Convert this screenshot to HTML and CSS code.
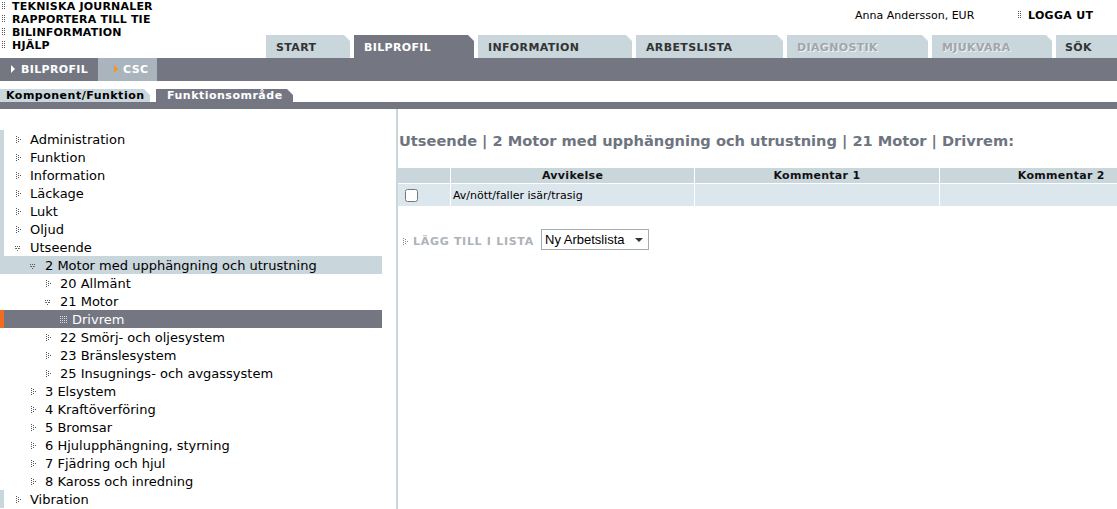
FILE: index.html
```html
<!DOCTYPE html>
<html lang="sv">
<head>
    <meta charset="UTF-8">
    <title>Bilprofil - CSC</title>
    <link rel="stylesheet" href="styles.css">
</head>
<body>
    <div class="header">
        <ul class="toplinks">
            <li><span class="dots"></span>TEKNISKA JOURNALER</li>
            <li><span class="dots"></span>RAPPORTERA TILL TIE</li>
            <li><span class="dots"></span>BILINFORMATION</li>
            <li><span class="dots"></span>HJÄLP</li>
        </ul>
        <div class="user">
            <span class="username">Anna Andersson, EUR</span>
            <span class="logout"><span class="dots"></span>LOGGA UT</span>
        </div>
    </div>

    <div class="tabs">
        <div class="tab t-start">START</div>
        <div class="tab t-bilprofil active">BILPROFIL</div>
        <div class="tab t-info">INFORMATION</div>
        <div class="tab t-arbets">ARBETSLISTA</div>
        <div class="tab t-diag disabled">DIAGNOSTIK</div>
        <div class="tab t-mjuk disabled">MJUKVARA</div>
        <div class="tab t-sok">SÖK</div>
    </div>

    <div class="subnav">
        <div class="subnav-item"><span class="arrow"></span>BILPROFIL</div>
        <div class="subnav-item current"><span class="arrow orange"></span>CSC</div>
    </div>

    <div class="subtabs">
        <div class="subtab">Komponent/Funktion</div>
        <div class="subtab active">Funktionsområde</div>
    </div>
    <div class="subbar"></div>

    <div class="main">
        <ul class="tree">
            <li class="node lvl0"><span class="ico closed"></span>Administration</li>
            <li class="node lvl0"><span class="ico closed"></span>Funktion</li>
            <li class="node lvl0"><span class="ico closed"></span>Information</li>
            <li class="node lvl0"><span class="ico closed"></span>Läckage</li>
            <li class="node lvl0"><span class="ico closed"></span>Lukt</li>
            <li class="node lvl0"><span class="ico closed"></span>Oljud</li>
            <li class="node lvl0"><span class="ico open"></span>Utseende</li>
            <li class="node lvl1 hilite"><span class="ico open"></span>2 Motor med upphängning och utrustning</li>
            <li class="node lvl2"><span class="ico closed"></span>20 Allmänt</li>
            <li class="node lvl2"><span class="ico open"></span>21 Motor</li>
            <li class="node lvl3 selected"><span class="ico leaf"></span>Drivrem</li>
            <li class="node lvl2"><span class="ico closed"></span>22 Smörj- och oljesystem</li>
            <li class="node lvl2"><span class="ico closed"></span>23 Bränslesystem</li>
            <li class="node lvl2"><span class="ico closed"></span>25 Insugnings- och avgassystem</li>
            <li class="node lvl1"><span class="ico closed"></span>3 Elsystem</li>
            <li class="node lvl1"><span class="ico closed"></span>4 Kraftöverföring</li>
            <li class="node lvl1"><span class="ico closed"></span>5 Bromsar</li>
            <li class="node lvl1"><span class="ico closed"></span>6 Hjulupphängning, styrning</li>
            <li class="node lvl1"><span class="ico closed"></span>7 Fjädring och hjul</li>
            <li class="node lvl1"><span class="ico closed"></span>8 Kaross och inredning</li>
            <li class="node lvl0"><span class="ico closed"></span>Vibration</li>
        </ul>

        <div class="content">
            <h1 class="title">Utseende | 2 Motor med upphängning och utrustning | 21 Motor | Drivrem:</h1>
            <table class="deviations">
                <tr>
                    <th class="col-check"></th>
                    <th class="col-text">Avvikelse</th>
                    <th class="col-text">Kommentar 1</th>
                    <th class="col-text">Kommentar 2</th>
                </tr>
                <tr>
                    <td class="col-check"><input type="checkbox"></td>
                    <td>Av/nött/faller isär/trasig</td>
                    <td></td>
                    <td></td>
                </tr>
            </table>
            <div class="addrow">
                <span class="addlabel"><span class="ico closed"></span>LÄGG TILL I LISTA</span>
                <div class="fakeselect">Ny Arbetslista<span class="caret"></span></div>
            </div>
        </div>
    </div>
</body>
</html>
```

FILE: styles.css
```css
body{
    margin: 0;
    overflow: hidden;
    font-family: "DejaVu Sans", Verdana, sans-serif;
    color: #000;
    background-color: #fff;
}

ul{
    list-style: none;
    margin: 0;
    padding: 0;
}

/* small dotted bullet, two columns of dots */
.dots{
    display: inline-block;
    position: relative;
    width: 10px;
    height: 8px;
}

.dots::before{
    content: "";
    position: absolute;
    left: 0;
    top: 0;
    width: 1px;
    height: 1px;
    background: #555;
    box-shadow: 0 2px #555, 0 4px #555, 0 6px #555,
                2px 0 #555, 2px 2px #555, 2px 4px #555, 2px 6px #555;
}

.header{
    height: 35px;
    display: flex;
    justify-content: space-between;
}

.toplinks{
    padding: 0 0 0 2px;
    font-size: 11px;
    font-weight: bold;
    letter-spacing: 0.2px;
    line-height: 13px;
}

.user{
    display: flex;
    align-items: flex-start;
    padding-top: 9px;
    font-size: 11px;
}

.username{
    width: 163px;
    padding-left: 175px;
}

.logout{
    font-weight: bold;
    letter-spacing: 0.3px;
    width: 99px;
}

.tabs{
    display: flex;
    gap: 4px;
    padding-left: 266px;
    height: 23px;
}

.tab{
    background-color: #c9d6dc;
    font-size: 11px;
    font-weight: bold;
    letter-spacing: 0.35px;
    color: #333;
    padding: 6px 0 0 10px;
    box-sizing: border-box;
    clip-path: polygon(0 0, calc(100% - 6px) 0, 100% 6px, 100% 100%, 0 100%);
}

.tab.active{
    background-color: #747782;
    color: #fff;
}

.tab.disabled{
    color: #a2a6ab;
    text-shadow: 1px 1px 0 #eef2f4;
}

.t-start{ width: 84px; }
.t-bilprofil{ width: 120px; }
.t-info{ width: 154px; }
.t-arbets{ width: 147px; }
.t-diag{ width: 141px; }
.t-mjuk{ width: 120px; }
.t-sok{ flex: 1; padding-left: 9px; clip-path: none; }

.subnav{
    height: 23px;
    background-color: #747782;
    display: flex;
}

.subnav-item{
    color: #fff;
    font-size: 11px;
    font-weight: bold;
    letter-spacing: 0.35px;
    padding: 5px 0 0 21px;
    position: relative;
    width: 98px;
    box-sizing: border-box;
}

.subnav-item.current{
    background-color: #a9b4bc;
    width: 59px;
    padding-left: 25px;
}

.arrow{
    position: absolute;
    top: 7px;
    left: 11px;
    width: 0;
    height: 0;
    border-top: 4px solid transparent;
    border-bottom: 4px solid transparent;
    border-left: 4px solid #fff;
}

.arrow.orange{
    left: 16px;
    border-left-color: #f7931e;
}

.subtabs{
    display: flex;
    margin-top: 8px;
    height: 13px;
    gap: 6px;
}

.subtab{
    background-color: #c9d6dc;
    font-size: 11px;
    font-weight: bold;
    letter-spacing: 0.5px;
    line-height: 14px;
    padding: 0 0 0 6px;
    width: 150px;
    box-sizing: border-box;
    white-space: nowrap;
    clip-path: polygon(0 0, calc(100% - 6px) 0, 100% 6px, 100% 100%, 0 100%);
}

.subtab.active{
    background-color: #747782;
    color: #fff;
    width: 137px;
    padding-left: 11px;
}

.subbar{
    height: 7px;
    background-color: #747782;
}

.main{
    display: flex;
    height: 400px;
}

.tree{
    width: 382px;
    padding-top: 21px;
    font-size: 13px;
}

.node{
    height: 18px;
    line-height: 20px;
    white-space: nowrap;
}

.lvl0{
    border-left: 4px solid #c9d6dc;
    padding-left: 11px;
}

.lvl1{ padding-left: 30px; }
.lvl2{ padding-left: 45px; }
.lvl3{ padding-left: 60px; }

.hilite{
    background-color: #c9d6dc;
}

.selected{
    background-color: #747782;
    color: #fff;
    border-left: 4px solid #f26b21;
    padding-left: 56px;
}

.ico{
    display: inline-block;
    position: relative;
    width: 15px;
    height: 18px;
    vertical-align: top;
}

.ico::before{
    content: "";
    position: absolute;
    width: 1px;
    height: 1px;
}

/* dotted arrow pointing right */
.ico.closed::before{
    left: 1px;
    top: 6px;
    background: #555;
    box-shadow: 0 2px #555, 0 4px #555, 0 6px #555,
                2px 1px #555, 2px 3px #555, 2px 5px #555,
                4px 3px #555;
}

/* dotted arrow pointing down */
.ico.open::before{
    left: 0;
    top: 8px;
    background: #555;
    box-shadow: 2px 0 #555, 4px 0 #555,
                1px 2px #555, 3px 2px #555,
                2px 4px #555, 0 2px #777, 4px 2px #777;
}

.ico.leaf{
    width: 12px;
}

.ico.leaf::before{
    left: 0;
    top: 6px;
    background: #ddd;
    box-shadow: 2px 0 #ddd, 4px 0 #ddd, 6px 0 #ddd,
                0 2px #ddd, 2px 2px #ddd, 4px 2px #ddd, 6px 2px #ddd,
                0 4px #ddd, 2px 4px #ddd, 4px 4px #ddd, 6px 4px #ddd,
                0 6px #ddd, 2px 6px #ddd, 4px 6px #ddd, 6px 6px #ddd;
}

.content{
    margin-left: 14px;
    border-left: 2px solid #c9d6dc;
    flex: 1;
    min-width: 0;
}

.title{
    margin: 23px 0 19px 1px;
    font-size: 14.6px;
    font-weight: bold;
    color: #6e7480;
    white-space: nowrap;
}

.deviations{
    border-collapse: separate;
    border-spacing: 0;
    width: 786px;
    font-size: 11px;
}

.deviations th{
    background-color: #c9d6dc;
    height: 15px;
    padding: 0;
    font-weight: bold;
    letter-spacing: 0.3px;
    color: #111;
    border-right: 1px solid #fff;
    border-bottom: 1px solid #fff;
}

.deviations td{
    background-color: #dce6ed;
    height: 22px;
    padding: 0 0 0 2px;
    border-right: 1px solid #fff;
}

.deviations .col-check{
    width: 50px;
}

.deviations .col-text{
    width: 244px;
}

.deviations input{
    margin: 0 0 0 5px;
    width: 13px;
    height: 13px;
    vertical-align: middle;
}

.addrow{
    display: flex;
    align-items: center;
    margin-top: 23px;
}

.addlabel{
    font-size: 11px;
    font-weight: bold;
    letter-spacing: 0.7px;
    color: #adb2b9;
    width: 143px;
    padding: 4px 0 0 4px;
    box-sizing: border-box;
    display: flex;
    align-items: center;
}

.addlabel .ico{
    width: 11px;
    height: 14px;
}

.addlabel .ico::before{
    top: 3px;
    background: #888;
    box-shadow: 0 2px #888, 0 4px #888, 0 6px #888,
                2px 1px #888, 2px 3px #888, 2px 5px #888,
                4px 3px #888;
}

.fakeselect{
    font-family: "Liberation Sans", Arial, sans-serif;
    font-size: 13px;
    height: 21px;
    line-height: 19px;
    box-sizing: border-box;
    border: 1px solid #a5acb2;
    padding: 0 0 0 3px;
    width: 108px;
    position: relative;
    background-color: #fff;
}

.caret{
    position: absolute;
    right: 5px;
    top: 8px;
    border-left: 4px solid transparent;
    border-right: 4px solid transparent;
    border-top: 4px solid #333;
}
```
